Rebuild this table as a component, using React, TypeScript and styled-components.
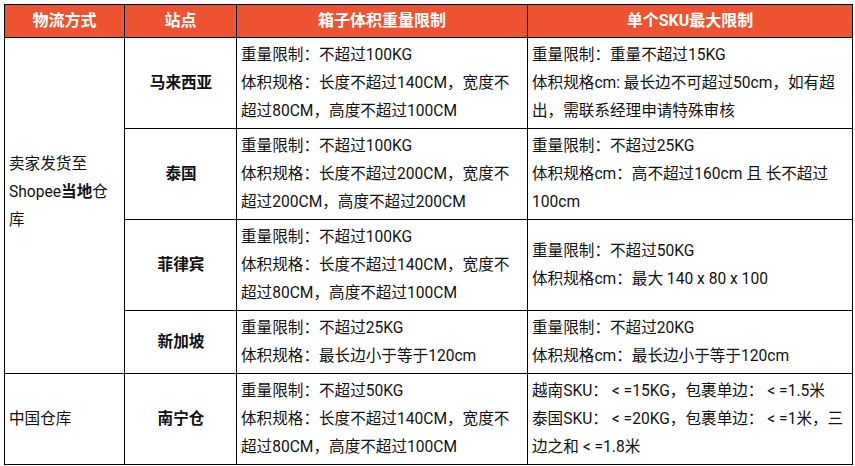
import React, { FC } from 'react';
import styled, { createGlobalStyle } from 'styled-components';

const GlobalStyle = createGlobalStyle`
  html, body {
    margin: 0;
    padding: 0;
    background: #ffffff;
  }
  body {
    font-family: Roboto, "Noto Sans CJK SC", sans-serif;
    color: #111111;
  }
`;

const Table = styled.table`
  margin: 4px 0 0 4px;
  width: 848px;
  border-collapse: collapse;
  table-layout: fixed;
  font-size: 15.6px;
  line-height: 28px;
`;

const HeadCell = styled.th`
  background: #ee5331;
  color: #ffffff;
  font-weight: 700;
  font-size: 16px;
  text-align: center;
  padding: 2px 4px;
  border: 1px solid #000;
  white-space: nowrap;
`;

const Cell = styled.td<{ $center?: boolean; $bold?: boolean; $shift?: number }>`
  border: 1px solid #000;
  padding: 3px 3px ${(p) => 3 + (p.$shift || 0)}px 4px;
  vertical-align: middle;
  text-align: ${(p) => (p.$center ? 'center' : 'left')};
  font-weight: ${(p) => (p.$bold ? 700 : 400)};
`;

const Line = styled.div`
  white-space: pre;
`;

const Strong = styled.b`
  font-weight: 700;
`;

const Lines: FC<{ lines: string[] }> = ({ lines }) => (
  <>
    {lines.map((l, i) => (
      <Line key={i}>{l}</Line>
    ))}
  </>
);

type Row = {
  site: string;
  box: string[];
  sku: string[];
};

const localRows: Row[] = [
  {
    site: '马来西亚',
    box: ['重量限制：不超过100KG', '体积规格：长度不超过140CM，宽度不', '超过80CM，高度不超过100CM'],
    sku: ['重量限制：重量不超过15KG', '体积规格cm: 最长边不可超过50cm，如有超', '出，需联系经理申请特殊审核'],
  },
  {
    site: '泰国',
    box: ['重量限制：不超过100KG', '体积规格：长度不超过200CM，宽度不', '超过200CM，高度不超过200CM'],
    sku: ['重量限制：不超过25KG', '体积规格cm：高不超过160cm 且 长不超过', '100cm'],
  },
  {
    site: '菲律宾',
    box: ['重量限制：不超过100KG', '体积规格：长度不超过140CM，宽度不', '超过80CM，高度不超过100CM'],
    sku: ['重量限制：不超过50KG', '体积规格cm：最大 140 x 80 x 100'],
  },
  {
    site: '新加坡',
    box: ['重量限制：不超过25KG', '体积规格：最长边小于等于120cm'],
    sku: ['重量限制：不超过20KG', '体积规格cm：最长边小于等于120cm'],
  },
];

const chinaRow: Row = {
  site: '南宁仓',
  box: ['重量限制：不超过50KG', '体积规格：长度不超过140CM，宽度不', '超过80CM，高度不超过100CM'],
  sku: ['越南SKU： < =15KG，包裹单边： < =1.5米', '泰国SKU： < =20KG，包裹单边： < =1米，三', '边之和 < =1.8米'],
};

const App: FC = () => (
  <>
    <GlobalStyle />
    <Table>
      <colgroup>
        <col style={{ width: 120 }} />
        <col style={{ width: 112 }} />
        <col style={{ width: 291 }} />
        <col style={{ width: 325 }} />
      </colgroup>
      <thead>
        <tr>
          <HeadCell>物流方式</HeadCell>
          <HeadCell>站点</HeadCell>
          <HeadCell>箱子体积重量限制</HeadCell>
          <HeadCell>单个SKU最大限制</HeadCell>
        </tr>
      </thead>
      <tbody>
        {localRows.map((row, i) => (
          <tr key={row.site}>
            {i === 0 && (
              <Cell rowSpan={localRows.length} $shift={28}>
                <Line>卖家发货至</Line>
                <Line>
                  Shopee<Strong>当地</Strong>仓
                </Line>
                <Line>库</Line>
              </Cell>
            )}
            <Cell $center $bold>{row.site}</Cell>
            <Cell>
              <Lines lines={row.box} />
            </Cell>
            <Cell>
              <Lines lines={row.sku} />
            </Cell>
          </tr>
        ))}
        <tr>
          <Cell>中国仓库</Cell>
          <Cell $center $bold>{chinaRow.site}</Cell>
          <Cell>
            <Lines lines={chinaRow.box} />
          </Cell>
          <Cell>
            <Lines lines={chinaRow.sku} />
          </Cell>
        </tr>
      </tbody>
    </Table>
  </>
);

export default App;
